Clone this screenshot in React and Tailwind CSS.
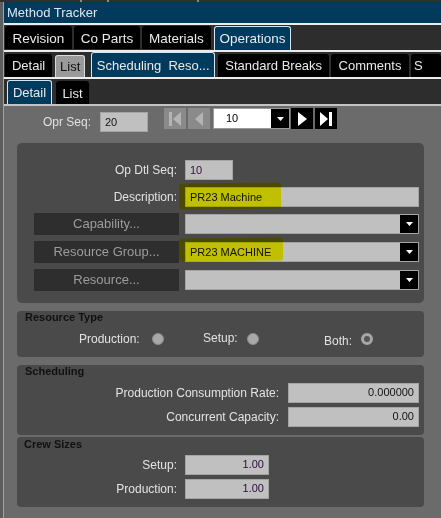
import React from 'react';

const Arrow = () => (
  <div className="w-[18px] h-full bg-black flex items-center justify-center shrink-0">
    <svg width="7" height="4" viewBox="0 0 7 4"><path d="M0 0h7L3.5 4z" fill="#fff" /></svg>
  </div>
);

const NavBtn = ({ dark, children }) => (
  <div className={`w-[22px] h-[21px] flex items-center justify-center ${dark ? 'bg-black' : 'bg-[#8a8a8a]'}`}>
    <svg width="14" height="16" viewBox="0 0 14 16" fill={dark ? '#ffffff' : '#b4b4b4'}>{children}</svg>
  </div>
);

const Input = ({ w, value, right, tone = 'text-[#111]' }) => (
  <div className={`${w} h-[20px] bg-[#c0c0c0] border border-[#a4a4a4] flex items-center text-[11px] ${tone} ${right ? 'justify-end pr-[4px]' : 'pl-[4px]'}`}>
    {value}
  </div>
);

const Select = ({ value }) => (
  <div className="w-[234px] h-[20px] bg-[#c0c0c0] border border-[#a4a4a4] flex items-center text-[11px] text-[#111]">
    <div className="flex-1 pl-[4px]">{value}</div>
    <Arrow />
  </div>
);

const LookupBtn = ({ label }) => (
  <div className="w-[145px] h-[22px] bg-[#2e2e2e] flex items-center justify-center text-[13px] text-[#9c9c9c]">{label}</div>
);

const Radio = ({ hollow }) =>
  hollow ? (
    <div className="w-[12px] h-[12px] rounded-full border-[3px] border-[#a6a6a6] bg-[#555]" />
  ) : (
    <div className="w-[12px] h-[12px] rounded-full bg-[#a8a8a8] border border-[#8c8c8c]" />
  );

const Highlight = ({ cls }) => (
  <div className={`absolute bg-[#ffff00] mix-blend-multiply rounded-[3px] -rotate-[0.6deg] ${cls}`} />
);

export default function App() {
  return (
    <div className="w-[441px] h-[518px] overflow-hidden bg-[#6b6b6b] font-['Liberation_Sans',Arial,sans-serif] flex flex-col">
      {/* window top edge */}
      <div className="h-[2px] bg-[#303030] flex shrink-0">
        <div className="ml-[80px] w-[2px] bg-[#8a8a8a]" />
        <div className="ml-[25px] w-[2px] bg-[#8a8a8a]" />
        <div className="ml-[88px] w-[2px] bg-[#8a8a8a]" />
      </div>
      <div className="flex flex-1 min-h-0">
        <div className="w-[4px] bg-[#5e5e5e] border-r border-[#a2a2a2] shrink-0" />
        <div className="flex-1 flex flex-col min-w-0">
          <div className="h-[21px] bg-[#003a5c] text-[13px] text-[#dde6ee] flex items-center pl-[3px]">Method Tracker</div>
          <div className="h-[2px] bg-[#ececec]" />

          {/* row 1 tabs */}
          <div className="h-[25px] bg-[#2d2d2d] flex items-end pl-[1px] text-[13.5px] text-[#eaeaea] whitespace-nowrap">
            <div className="w-[67px] h-[23px] bg-black rounded-t-[3px] flex items-center justify-center mb-[1px] pt-[3px]">Revision</div>
            <div className="ml-[2px] w-[66px] h-[23px] bg-black rounded-t-[3px] flex items-center justify-center mb-[1px] pt-[3px]">Co Parts</div>
            <div className="ml-[2px] w-[69px] h-[23px] bg-black rounded-t-[3px] flex items-center justify-center mb-[1px] pt-[3px]">Materials</div>
            <div className="ml-[3px] w-[77px] h-[24px] bg-[#003a5c] rounded-t-[3px] border border-b-0 border-[#d4e6f3] flex justify-center pt-[2px]">Operations</div>
          </div>
          <div className="h-[2px] bg-[#ececec]" />

          {/* row 2 tabs */}
          <div className="h-[25px] bg-[#2d2d2d] flex items-end pl-[1px] text-[13px] text-[#eaeaea] whitespace-nowrap overflow-hidden">
            <div className="w-[49px] h-[23px] bg-black rounded-t-[3px] flex items-center justify-center pt-[1px]">Detail</div>
            <div className="ml-[3px] w-[31px] h-[22px] bg-[#9a9a9a] rounded-t-[3px] border border-b-0 border-[#dadada] text-[#111] flex items-center justify-center">List</div>
            <div className="ml-[6px] w-[129px] h-[25px] bg-[#003a5c] rounded-t-[3px] border border-b-0 border-[#d4e6f3] flex justify-center pt-[3px]">Scheduling&nbsp; Reso...</div>
            <div className="ml-[3px] w-[115px] h-[23px] bg-black rounded-t-[3px] flex items-center justify-center pt-[1px]">Standard Breaks</div>
            <div className="ml-[2px] w-[81px] h-[23px] bg-black rounded-t-[3px] flex items-center justify-center pt-[1px]">Comments</div>
            <div className="ml-[2px] w-[30px] h-[23px] bg-black rounded-t-[3px] flex items-center pl-[3px] pt-[1px] shrink-0">S</div>
          </div>
          <div className="h-[2px] bg-[#ececec]" />

          {/* row 3 tabs */}
          <div className="h-[25px] bg-[#2d2d2d] flex items-end pl-[3px] text-[13px] text-[#eaeaea]">
            <div className="w-[45px] h-[24px] bg-[#003a5c] rounded-t-[3px] border border-b-0 border-[#d4e6f3] flex justify-center pt-[2px]">Detail</div>
            <div className="ml-[4px] w-[33px] h-[23px] bg-black rounded-t-[3px] flex items-center justify-center pt-[2px]">List</div>
          </div>
          <div className="h-[2px] bg-[#c4c4c4]" />

          {/* content */}
          <div className="flex-1 relative text-[12px] text-[#e2e2e2]">
            <div className="flex items-start pt-[2px]">
              <div className="mt-[4px] flex items-center">
                <div className="w-[87px] text-right">Opr Seq:</div>
                <div className="ml-[9px]"><Input w="w-[48px]" value="20" /></div>
              </div>
              <div className="ml-[16px] flex items-center">
                <NavBtn><path d="M1 1h3v14H1zM13 1v14L5 8z" /></NavBtn>
                <div className="ml-[2px]"><NavBtn><path d="M11 1v14L3 8z" /></NavBtn></div>
                <div className="ml-[3px] w-[77px] h-[21px] bg-white border border-[#9a9a9a] flex items-center text-[11px] text-black">
                  <div className="flex-1 pl-[12px]">10</div>
                  <Arrow />
                </div>
                <div className="ml-[1px]"><NavBtn dark><path d="M3 1v14l9-7z" /></NavBtn></div>
                <div className="ml-[2px]"><NavBtn dark><path d="M1 1v14l8-7zM10 1h3v14h-3z" /></NavBtn></div>
              </div>
            </div>

            {/* main panel */}
            <div className="ml-[13px] mt-[11px] w-[407px] h-[160px] bg-[#4a4a4a] rounded-[5px] pt-[17px] pl-[17px] flex flex-col">
              <div className="flex items-center h-[20px]">
                <div className="w-[143px] text-right">Op Dtl Seq:</div>
                <div className="ml-[8px]"><Input w="w-[48px]" value="10" tone="text-[#3a0a44]" /></div>
              </div>
              <div className="flex items-center h-[20px] mt-[7px]">
                <div className="w-[143px] text-right">Description:</div>
                <div className="ml-[8px]"><Input w="w-[234px]" value="PR23 Machine" /></div>
              </div>
              <div className="flex items-center h-[22px] mt-[6px]">
                <LookupBtn label="Capability..." />
                <div className="ml-[6px]"><Select value="" /></div>
              </div>
              <div className="flex items-center h-[22px] mt-[6px]">
                <LookupBtn label="Resource Group..." />
                <div className="ml-[6px]"><Select value="PR23 MACHINE" /></div>
              </div>
              <div className="flex items-center h-[22px] mt-[6px]">
                <LookupBtn label="Resource..." />
                <div className="ml-[6px]"><Select value="" /></div>
              </div>
            </div>

            {/* resource type */}
            <div className="ml-[13px] mt-[8px] w-[407px] h-[46px] bg-[#4a4a4a] rounded-[4px] flex flex-col">
              <div className="pl-[8px] text-[11px] leading-[13px] font-bold text-[#111]">Resource Type</div>
              <div className="mt-[8px] h-[14px] flex items-center">
                <div className="ml-[62px] w-[63px]">Production:</div>
                <div className="ml-[10px]"><Radio /></div>
                <div className="ml-[39px] w-[36px] -mt-[3px]">Setup:</div>
                <div className="ml-[8px]"><Radio /></div>
                <div className="ml-[65px] w-[33px] mt-[3px]">Both:</div>
                <div className="ml-[4px]"><Radio hollow /></div>
              </div>
            </div>

            {/* scheduling */}
            <div className="ml-[13px] mt-[8px] w-[407px] h-[70px] bg-[#4a4a4a] rounded-[4px] flex flex-col">
              <div className="pl-[8px] text-[11px] leading-[13px] font-bold text-[#111]">Scheduling</div>
              <div className="mt-[5px] flex items-center h-[19px]">
                <div className="w-[262px] text-right">Production Consumption Rate:</div>
                <div className="ml-[9px]"><Input w="w-[131px]" value="0.000000" right /></div>
              </div>
              <div className="mt-[5px] flex items-center h-[19px]">
                <div className="w-[262px] text-right">Concurrent Capacity:</div>
                <div className="ml-[9px]"><Input w="w-[131px]" value="0.00" right /></div>
              </div>
            </div>

            {/* crew sizes */}
            <div className="ml-[13px] mt-[2px] w-[407px] h-[70px] bg-[#4a4a4a] rounded-[4px] flex flex-col">
              <div className="pl-[7px] text-[11px] leading-[13px] font-bold text-[#111] pt-[1px]">Crew Sizes</div>
              <div className="mt-[4px] flex items-center h-[19px]">
                <div className="w-[160px] text-right">Setup:</div>
                <div className="ml-[8px]"><Input w="w-[84px]" value="1.00" right tone="text-[#2a0a3a]" /></div>
              </div>
              <div className="mt-[5px] flex items-center h-[19px]">
                <div className="w-[160px] text-right">Production:</div>
                <div className="ml-[8px]"><Input w="w-[84px]" value="1.00" right tone="text-[#2a0a3a]" /></div>
              </div>
            </div>

            <Highlight cls="left-[175px] top-[77px] w-[102px] h-[26px]" />
            <Highlight cls="left-[175px] top-[132px] w-[104px] h-[23px]" />
          </div>
        </div>
      </div>
    </div>
  );
}
